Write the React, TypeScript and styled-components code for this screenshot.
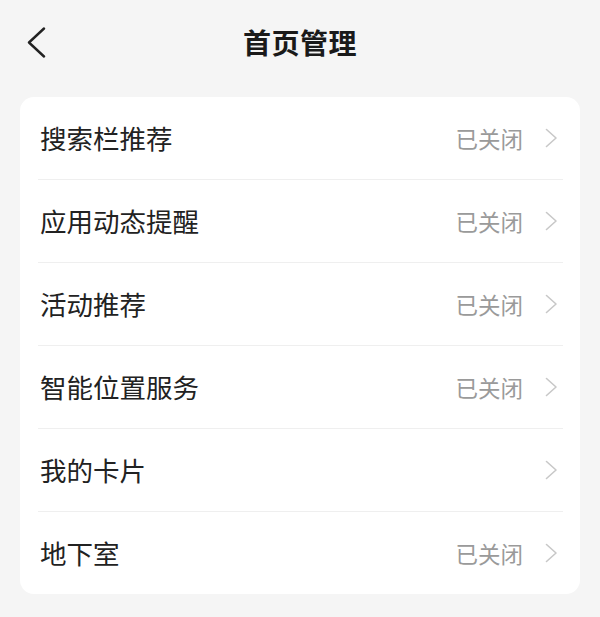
import React from "react";
import styled, { createGlobalStyle } from "styled-components";

const GlobalStyle = createGlobalStyle`
  html, body {
    margin: 0;
    padding: 0;
    background: #f5f5f5;
    font-family: "Noto Sans CJK SC", "Noto Sans", sans-serif;
  }
`;

const Page = styled.div`
  width: 600px;
  height: 617px;
  background: #f5f5f5;
  display: flex;
  flex-direction: column;
`;

const Header = styled.div`
  position: relative;
  height: 84px;
  display: flex;
  align-items: center;
  justify-content: center;
`;

const BackButton = styled.div`
  position: absolute;
  left: 26px;
  top: 27px;
  width: 20px;
  height: 31px;
  display: flex;
`;

const Title = styled.h1`
  margin: 0;
  font-size: 28px;
  line-height: 1;
  font-weight: 700;
  color: #1a1a1a;
  letter-spacing: 0.5px;
`;

const Card = styled.div`
  margin: 13px 20px 0 20px;
  background: #ffffff;
  border-radius: 14px;
  padding: 0 17px 0 18px;
`;

const Row = styled.div<{ $first?: boolean }>`
  height: 82px;
  display: flex;
  align-items: center;
  justify-content: space-between;
  border-top: ${(p) => (p.$first ? "none" : "1px solid #efefef")};
`;

const Label = styled.span`
  font-size: 26.5px;
  line-height: 1;
  color: #222222;
  padding-left: 2px;
`;

const Right = styled.div`
  display: flex;
  align-items: center;
  gap: 22px;
  padding-right: 5px;
`;

const Status = styled.span`
  font-size: 22.5px;
  line-height: 1;
  color: #9a9a9a;
`;

const Chevron = () => (
  <svg width="13" height="20" viewBox="0 0 13 20" fill="none">
    <path d="M1.5 1.5L11 10L1.5 18.5" stroke="#c8c8c8" strokeWidth="1.6" strokeLinecap="round" strokeLinejoin="round" />
  </svg>
);

const items = [
  { label: "搜索栏推荐", status: "已关闭" },
  { label: "应用动态提醒", status: "已关闭" },
  { label: "活动推荐", status: "已关闭" },
  { label: "智能位置服务", status: "已关闭" },
  { label: "我的卡片", status: "" },
  { label: "地下室", status: "已关闭" },
];

const App = () => {
  return (
    <Page>
      <GlobalStyle />
      <Header>
        <BackButton>
          <svg width="20" height="31" viewBox="0 0 20 31" fill="none">
            <path d="M18 1.5L3 15.5L18 29.5" stroke="#222" strokeWidth="2.4" strokeLinecap="round" strokeLinejoin="round" />
          </svg>
        </BackButton>
        <Title>首页管理</Title>
      </Header>
      <Card>
        {items.map((item, i) => (
          <Row key={item.label} $first={i === 0}>
            <Label>{item.label}</Label>
            <Right>
              {item.status && <Status>{item.status}</Status>}
              <Chevron />
            </Right>
          </Row>
        ))}
      </Card>
    </Page>
  );
};

export default App;
